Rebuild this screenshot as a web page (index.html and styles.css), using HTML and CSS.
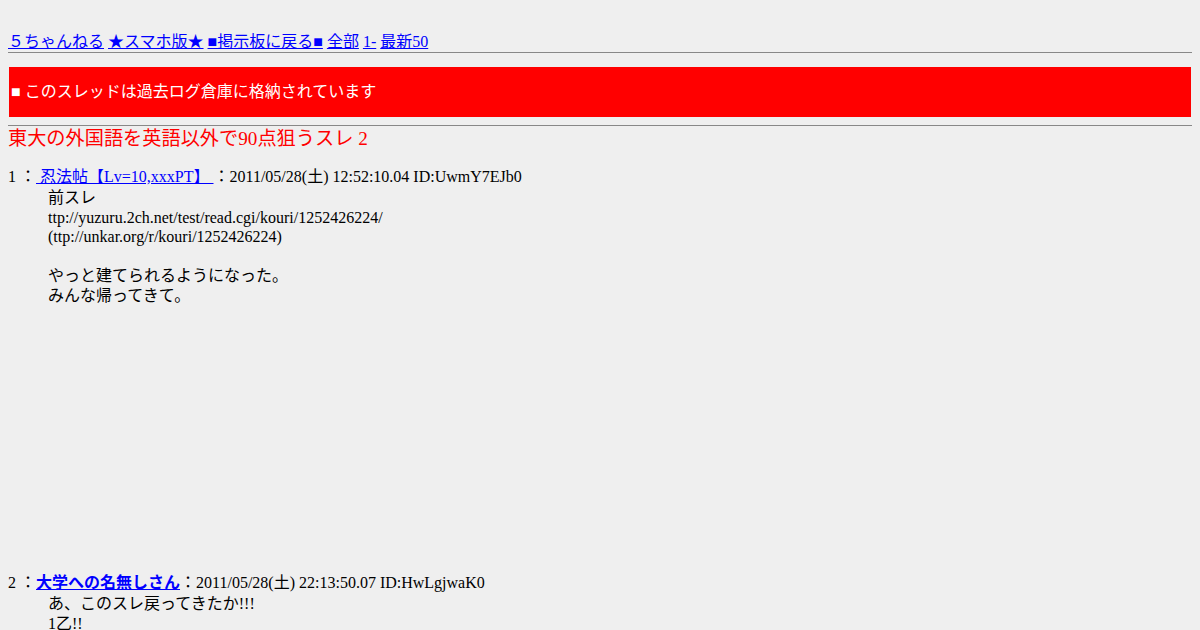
FILE: index.html
```html
<!DOCTYPE html>
<html lang="ja">
<head>
<meta charset="utf-8">
<title>東大の外国語を英語以外で90点狙うスレ 2</title>
<link rel="stylesheet" href="styles.css">
</head>
<body>
<div class="topspace"></div>
<div class="menu"><a href="#">５ちゃんねる</a> <a href="#">★スマホ版★</a> <a href="#">■掲示板に戻る■</a> <a href="#">全部</a> <a href="#">1-</a> <a href="#">最新50</a></div>
<hr class="rule">
<div class="kako">■ このスレッドは過去ログ倉庫に格納されています</div>
<hr class="rule rule2">
<h1 class="title">東大の外国語を英語以外で90点狙うスレ 2</h1>
<dl class="thread">
  <dt class="head">1 ：<a href="#" class="name"> 忍法帖【Lv=10,xxxPT】 </a>：2011/05/28(土) 12:52:10.04 ID:UwmY7EJb0</dt>
  <dd class="msg msg1">前スレ<br>ttp://yuzuru.2ch.net/test/read.cgi/kouri/1252426224/<br>(ttp://unkar.org/r/kouri/1252426224)<br><br>やっと建てられるようになった。<br>みんな帰ってきて。</dd>
  <dt class="head">2 ：<a href="#" class="name bold">大学への名無しさん</a>：2011/05/28(土) 22:13:50.07 ID:HwLgjwaK0</dt>
  <dd class="msg msg2">あ、このスレ戻ってきたか!!!<br>1乙!!</dd>
</dl>
</body>
</html>
```

FILE: styles.css
```css
html, body {
  background: #efefef;
}
body {
  margin: 8px;
  font-family: "Liberation Serif", "Noto Sans CJK JP", serif;
  font-size: 16px;
  line-height: 1.2;
  color: #000;
}
a {
  color: #0000ff;
}
.topspace {
  height: 25px;
}
.menu {
  line-height: 18px;
}
.rule {
  border: 0;
  border-top: 1px solid #888;
  margin: 1px 0 0;
  height: 0;
}
.kako {
  background: #ff0000;
  color: #fff;
  margin: 14px 1px 0;
  height: 50px;
  display: flex;
  align-items: center;
  padding-left: 2px;
}
.rule2 {
  margin-top: 8px;
}
.title {
  color: #ff0000;
  font-size: 19.2px;
  font-weight: normal;
  margin: 2px 0 0;
  line-height: 22px;
}
.thread {
  margin: 17px 0 0;
}
.head {
  line-height: 20px;
}
.name.bold {
  font-weight: bold;
}
.msg {
  margin: 0 0 0 40px;
  padding-top: 1px;
  line-height: 19.5px;
}
.msg1 {
  margin-bottom: 268px;
}
.msg2 {
  line-height: 20px;
}
```
